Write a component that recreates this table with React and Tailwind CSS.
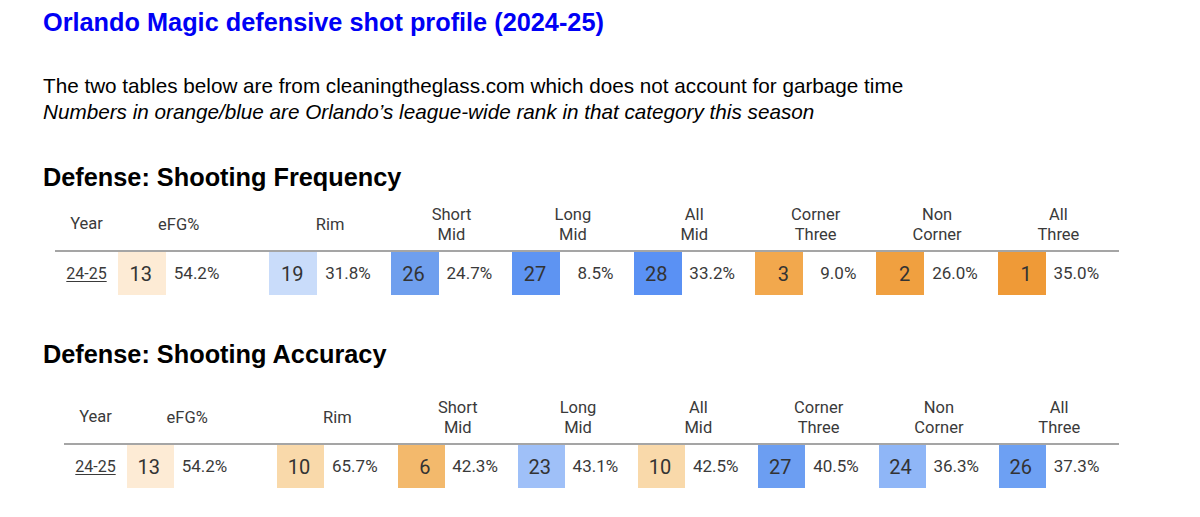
import React from "react";

const frequency = [
  { label: ["eFG%"], rank: 13, value: "54.2%", bg: "bg-[#fdebd5]" },
  { label: ["Rim"], rank: 19, value: "31.8%", bg: "bg-[#c9dcfa]" },
  { label: ["Short", "Mid"], rank: 26, value: "24.7%", bg: "bg-[#6f9fee]" },
  { label: ["Long", "Mid"], rank: 27, value: "8.5%", bg: "bg-[#5e94f2]" },
  { label: ["All", "Mid"], rank: 28, value: "33.2%", bg: "bg-[#5a91f4]" },
  { label: ["Corner", "Three"], rank: 3, value: "9.0%", bg: "bg-[#f2a84d]" },
  { label: ["Non", "Corner"], rank: 2, value: "26.0%", bg: "bg-[#f0a040]" },
  { label: ["All", "Three"], rank: 1, value: "35.0%", bg: "bg-[#ef9a37]" },
];

const accuracy = [
  { label: ["eFG%"], rank: 13, value: "54.2%", bg: "bg-[#fdebd5]" },
  { label: ["Rim"], rank: 10, value: "65.7%", bg: "bg-[#f9d9aa]" },
  { label: ["Short", "Mid"], rank: 6, value: "42.3%", bg: "bg-[#f3b96c]" },
  { label: ["Long", "Mid"], rank: 23, value: "43.1%", bg: "bg-[#9fc0f8]" },
  { label: ["All", "Mid"], rank: 10, value: "42.5%", bg: "bg-[#f9d9aa]" },
  { label: ["Corner", "Three"], rank: 27, value: "40.5%", bg: "bg-[#6c9ef2]" },
  { label: ["Non", "Corner"], rank: 24, value: "36.3%", bg: "bg-[#8fb6f7]" },
  { label: ["All", "Three"], rank: 26, value: "37.3%", bg: "bg-[#6da0f3]" },
];

const StatTable = ({ data, groupW, rankW, className }) => {
  const [efg, ...rest] = data;

  const HeaderCell = ({ label }) => (
    <div className="flex flex-col items-center justify-center text-center" style={{ width: groupW }}>
      {label.map((line) => (
        <span key={line} className="leading-[19.5px]">{line}</span>
      ))}
    </div>
  );

  const RowCell = ({ item }) => (
    <div className="flex h-full" style={{ width: groupW }}>
      <div
        className={`${item.bg} h-full flex items-center justify-end pr-[14px] text-[20px] text-[#333]`}
        style={{ width: rankW }}
      >
        {item.rank}
      </div>
      <div className="flex-1 flex items-center justify-end pr-[20px] text-[17px] text-[#3a3a3a]">
        {item.value}
      </div>
    </div>
  );

  return (
    <div className={`w-fit font-['Roboto',sans-serif] ${className}`}>
      {/* Header */}
      <div className="flex h-[49px] pt-[2px] pb-[6px] border-b-2 border-[#a5a5a5] text-[16.5px] text-[#3a3a3a]">
        <div className="w-[63px] flex items-center justify-center">Year</div>
        <HeaderCell label={efg.label} />
        <div className="w-[30px]" />
        {rest.map((item) => (
          <HeaderCell key={item.label.join(" ")} label={item.label} />
        ))}
      </div>

      {/* Row */}
      <div className="flex h-[43px]">
        <div className="w-[63px] flex items-center justify-center text-[16px] text-[#3a3a3a] underline underline-offset-2">
          24-25
        </div>
        <RowCell item={efg} />
        <div className="w-[30px]" />
        {rest.map((item) => (
          <RowCell key={item.label.join(" ")} item={item} />
        ))}
      </div>
    </div>
  );
};

export default function App() {
  return (
    <div className="w-[1200px] h-[517px] bg-white overflow-hidden pl-[43px] pt-[8px] font-['Liberation_Sans',Arial,sans-serif]">
      <h1 className="text-[25.3px] leading-[29px] font-bold text-[#0000f5]">
        Orlando Magic defensive shot profile (2024-25)
      </h1>

      <div className="mt-[36px] text-[20.7px] leading-[26px] text-black">
        <p>The two tables below are from cleaningtheglass.com which does not account for garbage time</p>
        <p className="italic">Numbers in orange/blue are Orlando’s league-wide rank in that category this season</p>
      </div>

      <h2 className="mt-[38px] text-[25.3px] leading-[29px] font-bold text-black">
        Defense: Shooting Frequency
      </h2>
      <StatTable data={frequency} groupW={121.4} rankW={48} className="mt-[11px] ml-[12px]" />

      <h2 className="mt-[45px] text-[25.3px] leading-[29px] font-bold text-black">
        Defense: Shooting Accuracy
      </h2>
      <StatTable data={accuracy} groupW={120.3} rankW={47} className="mt-[27px] ml-[21px]" />
    </div>
  );
}
